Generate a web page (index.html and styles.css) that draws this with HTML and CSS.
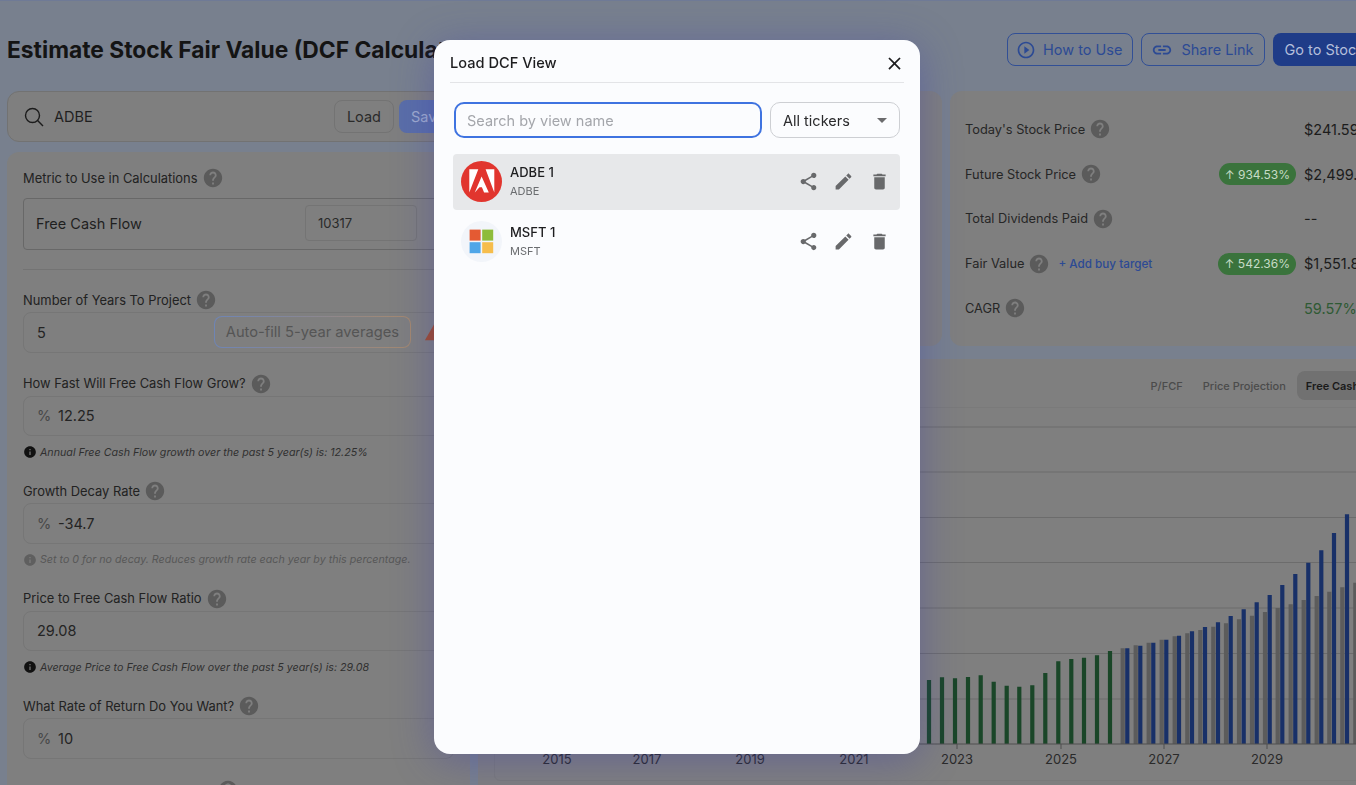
FILE: index.html
```html
<!DOCTYPE html>
<html lang="en">
<head>
	<meta charset="UTF-8">
	<title>Estimate Stock Fair Value (DCF Calculator)</title>
	<link rel="stylesheet" href="styles.css">
</head>
<body>
	<svg class="defs" width="0" height="0">
		<symbol id="i-help" viewBox="0 0 24 24"><path d="M12 2C6.48 2 2 6.48 2 12s4.48 10 10 10 10-4.48 10-10S17.52 2 12 2zm1 17h-2v-2h2v2zm2.07-7.75-.9.92C13.45 12.9 13 13.5 13 15h-2v-.5c0-1.1.45-2.1 1.17-2.83l1.24-1.26c.37-.36.59-.86.59-1.41 0-1.1-.9-2-2-2s-2 .9-2 2H8c0-2.21 1.79-4 4-4s4 1.79 4 4c0 .88-.36 1.68-.93 2.25z"/></symbol>
		<symbol id="i-info" viewBox="0 0 24 24"><path d="M12 2C6.48 2 2 6.48 2 12s4.48 10 10 10 10-4.48 10-10S17.52 2 12 2zm1 15h-2v-6h2v6zm0-8h-2V7h2v2z"/></symbol>
		<symbol id="i-share" viewBox="0 0 24 24"><path d="M18 16.08c-.76 0-1.44.3-1.96.77L8.91 12.7c.05-.23.09-.46.09-.7s-.04-.47-.09-.7l7.05-4.11c.54.5 1.25.81 2.04.81 1.66 0 3-1.34 3-3s-1.34-3-3-3-3 1.34-3 3c0 .24.04.47.09.7L8.04 9.81C7.5 9.31 6.79 9 6 9c-1.66 0-3 1.34-3 3s1.34 3 3 3c.79 0 1.5-.31 2.04-.81l7.12 4.16c-.05.21-.08.43-.08.65 0 1.61 1.31 2.92 2.92 2.92s2.92-1.31 2.92-2.92-1.31-2.92-2.92-2.92z"/></symbol>
		<symbol id="i-edit" viewBox="0 0 24 24"><path d="M3 17.25V21h3.75L17.81 9.94l-3.75-3.75L3 17.25zM20.71 7.04c.39-.39.39-1.02 0-1.41l-2.34-2.34c-.39-.39-1.02-.39-1.41 0l-1.83 1.83 3.75 3.75 1.83-1.83z"/></symbol>
		<symbol id="i-delete" viewBox="0 0 24 24"><path d="M6 19c0 1.1.9 2 2 2h8c1.1 0 2-.9 2-2V7H6v12zM19 4h-3.5l-1-1h-5l-1 1H5v2h14V4z"/></symbol>
	</svg>

	<div class="page">
		<div class="topbar">
			<h1>Estimate Stock Fair Value (DCF Calculator)</h1>
			<div class="top-btns">
				<a class="btn-line how">
					<svg viewBox="0 0 24 24" width="20" height="20"><path d="M10 16.5l6-4.5-6-4.5v9zM12 2C6.48 2 2 6.48 2 12s4.48 10 10 10 10-4.48 10-10S17.52 2 12 2zm0 18c-4.41 0-8-3.59-8-8s3.59-8 8-8 8 3.59 8 8-3.59 8-8 8z"/></svg>
					How to Use
				</a>
				<a class="btn-line">
					<svg viewBox="0 0 24 24" width="22" height="22"><path d="M3.9 12c0-1.71 1.39-3.1 3.1-3.1h4V7H7c-2.76 0-5 2.24-5 5s2.24 5 5 5h4v-1.9H7c-1.71 0-3.1-1.39-3.1-3.1zM8 13h8v-2H8v2zm9-6h-4v1.9h4c1.71 0 3.1 1.39 3.1 3.1s-1.39 3.1-3.1 3.1h-4V17h4c2.76 0 5-2.24 5-5s-2.24-5-5-5z"/></svg>
					Share Link
				</a>
				<a class="btn-fill">Go to Stock Analysis</a>
			</div>
		</div>

		<div class="main">
			<div class="left">
				<div class="search-card">
					<svg class="search-icon" viewBox="0 0 20 20" width="20" height="20"><circle cx="8.5" cy="8.5" r="7"/><path d="M13.6 13.6l5.4 5.4"/></svg>
					<span class="ticker">ADBE</span>
					<a class="btn-load">Load</a>
					<a class="btn-save">Save</a>
				</div>

				<div class="form-card">
					<div class="label first">Metric to Use in Calculations <svg class="help"><use href="#i-help"/></svg></div>
					<div class="metric">
						<span>Free Cash Flow</span>
						<div class="metric-input">10317</div>
					</div>
					<div class="divider"></div>

					<div class="group">
						<div class="label">Number of Years To Project <svg class="help"><use href="#i-help"/></svg></div>
						<div class="field">
							<span class="val">5</span>
							<a class="btn-auto">Auto-fill 5-year averages</a>
							<svg class="warn" viewBox="0 0 24 24" width="22" height="22"><path d="M1 21h22L12 2 1 21z"/></svg>
						</div>
					</div>

					<div class="group">
						<div class="label">How Fast Will Free Cash Flow Grow? <svg class="help"><use href="#i-help"/></svg></div>
						<div class="field"><span class="unit">%</span><span class="val">12.25</span></div>
						<div class="hint"><svg class="info"><use href="#i-info"/></svg>Annual Free Cash Flow growth over the past 5 year(s) is: 12.25%</div>
					</div>

					<div class="group">
						<div class="label">Growth Decay Rate <svg class="help"><use href="#i-help"/></svg></div>
						<div class="field"><span class="unit">%</span><span class="val">-34.7</span></div>
						<div class="hint faded"><svg class="info"><use href="#i-info"/></svg>Set to 0 for no decay. Reduces growth rate each year by this percentage.</div>
					</div>

					<div class="group">
						<div class="label">Price to Free Cash Flow Ratio <svg class="help"><use href="#i-help"/></svg></div>
						<div class="field"><span class="val">29.08</span></div>
						<div class="hint"><svg class="info"><use href="#i-info"/></svg>Average Price to Free Cash Flow over the past 5 year(s) is: 29.08</div>
					</div>

					<div class="group">
						<div class="label">What Rate of Return Do You Want? <svg class="help"><use href="#i-help"/></svg></div>
						<div class="field"><span class="unit">%</span><span class="val">10</span></div>
					</div>

					<!-- only the top of this icon shows at the bottom of the window -->
					<div class="label cut-off"><svg class="help"><use href="#i-help"/></svg></div>
				</div>
			</div>

			<div class="right">
				<div class="cards">
					<div class="card"></div>
					<div class="card results">
						<div class="row">
							<div class="row-label">Today's Stock Price <svg class="help"><use href="#i-help"/></svg></div>
							<div class="row-val">$241.59</div>
						</div>
						<div class="row">
							<div class="row-label">Future Stock Price <svg class="help"><use href="#i-help"/></svg></div>
							<span class="badge">↑ 934.53%</span>
							<div class="row-val">$2,499.10</div>
						</div>
						<div class="row">
							<div class="row-label">Total Dividends Paid <svg class="help"><use href="#i-help"/></svg></div>
							<div class="row-val">--</div>
						</div>
						<div class="row">
							<div class="row-label">Fair Value <svg class="help"><use href="#i-help"/></svg><a class="buy">+ Add buy target</a></div>
							<span class="badge">↑ 542.36%</span>
							<div class="row-val">$1,551.80</div>
						</div>
						<div class="row">
							<div class="row-label">CAGR <svg class="help"><use href="#i-help"/></svg></div>
							<div class="row-val green">59.57%</div>
						</div>
					</div>
				</div>

				<div class="chart-card">
					<div class="tabs">
						<span class="tab">P/FCF</span>
						<span class="tab">Price Projection</span>
						<span class="tab active">Free Cash Flow</span>
					</div>
					<div class="chart-box">
						<!-- viewBox uses page coordinates so the bars can be read straight off the picture -->
						<svg class="chart" viewBox="494 407 904 373" width="904" height="373">
							<path class="grid" d="M494 427H1398M494 472H1398M494 517.5H1398M494 562.5H1398M494 608H1398M494 653.5H1398M494 699H1398"/>
							<path class="bars gray" d="M1122.7 744V648.3M1135.7 744V645.3M1148.7 744V642.7M1161.7 744V639.7M1174.7 744V636.3M1187.3 744V633.3M1200.3 744V630M1213.3 744V626.7M1226 744V623.3M1239 744V619.3M1252 744V615.7M1265 744V612M1277.7 744V608M1290.7 744V604.3M1303.7 744V600M1316.7 744V596M1329.3 744V591.7M1342.3 744V587.3M1355.3 744V582.7"/>
							<path class="bars green" d="M929 744V680M942 744V677.3M955 744V678.3M968 744V677M980.7 744V675.3M993.7 744V681.7M1006.7 744V685.7M1019.3 744V686.7M1032.3 744V685.3M1045.3 744V673M1058.3 744V661.3M1071.3 744V659M1084 744V657.7M1097 744V655.3M1110 744V651"/>
							<path class="bars blue" d="M1127.3 744V648.3M1140.3 744V645.7M1153.3 744V642.7M1166.3 744V639.7M1179 744V635.7M1192 744V631.3M1205 744V627M1218 744V622.3M1230.7 744V616M1243.7 744V609.3M1256.7 744V602.3M1269.7 744V595M1282.3 744V585M1295.3 744V574M1308.3 744V562.7M1321.3 744V550.3M1334 744V533M1347 744V514.3"/>
							<path class="axis" d="M494 744H1398M557 744v5M647 744v5M750 744v5M854 744v5M957 744v5M1061 744v5M1164 744v5M1267 744v5"/>
							<g class="years">
								<text x="557" y="764">2015</text>
								<text x="647" y="764">2017</text>
								<text x="750" y="764">2019</text>
								<text x="854" y="764">2021</text>
								<text x="957" y="764">2023</text>
								<text x="1061" y="764">2025</text>
								<text x="1164" y="764">2027</text>
								<text x="1267" y="764">2029</text>
							</g>
						</svg>
					</div>
				</div>
			</div>
		</div>
	</div>

	<div class="modal">
		<div class="modal-head">
			<span>Load DCF View</span>
			<svg class="close" viewBox="0 0 24 24" width="21" height="21"><path d="M19 6.41 17.59 5 12 10.59 6.41 5 5 6.41 10.59 12 5 17.59 6.41 19 12 13.41 17.59 19 19 17.59 13.41 12z"/></svg>
		</div>
		<div class="filters">
			<input class="view-search" type="text" placeholder="Search by view name">
			<div class="view-select">All tickers<i class="caret"></i></div>
		</div>
		<div class="views">
			<div class="view selected">
				<svg class="logo" viewBox="0 0 41 41" width="41" height="41">
					<circle cx="20.5" cy="20.5" r="20.5" fill="#e1352e"/>
					<path fill="#fff" d="M8.3 8.3h9L8.3 31.5zM24.6 8.3h8.7v23.2zM20.6 15.5L27.8 31.5H23.1L20.9 26.2H18.5L13.8 31.5z"/>
				</svg>
				<div class="view-text">
					<div class="view-name">ADBE 1</div>
					<div class="view-ticker">ADBE</div>
				</div>
				<div class="view-actions">
					<svg><use href="#i-share"/></svg>
					<svg><use href="#i-edit"/></svg>
					<svg><use href="#i-delete"/></svg>
				</div>
			</div>
			<div class="view">
				<svg class="logo" viewBox="0 0 41 41" width="41" height="41">
					<circle cx="20.5" cy="20.5" r="20.5" fill="#f2f5fa"/>
					<rect x="8.6" y="8.6" width="11" height="11" fill="#e45a33"/>
					<rect x="21.2" y="8.6" width="11" height="11" fill="#8ebc3b"/>
					<rect x="8.6" y="21.2" width="11" height="11" fill="#4fa6e8"/>
					<rect x="21.2" y="21.2" width="11" height="11" fill="#f6bd4c"/>
				</svg>
				<div class="view-text">
					<div class="view-name">MSFT 1</div>
					<div class="view-ticker">MSFT</div>
				</div>
				<div class="view-actions">
					<svg><use href="#i-share"/></svg>
					<svg><use href="#i-edit"/></svg>
					<svg><use href="#i-delete"/></svg>
				</div>
			</div>
		</div>
	</div>
</body>
</html>
```
FILE: styles.css
```css
*{
	margin: 0;
	padding: 0;
	box-sizing: border-box;
}
body{
	height: 785px;
	overflow: hidden;
	background-color: #78808e;
	font-family: Inter, "Liberation Sans", sans-serif;
	color: #1f1f1f;
	border-top: 1px solid #6f7a96;
}
.defs{
	position: absolute;
}
.page{
	width: 1420px;
	padding-left: 7px;
}

/* top bar */
.topbar{
	display: flex;
	justify-content: space-between;
	align-items: center;
	height: 33px;
	margin-top: 32px;
}
.topbar h1{
	font-size: 22.8px;
	font-weight: 700;
	color: #141414;
	white-space: nowrap;
}
.top-btns{
	display: flex;
	gap: 8px;
	width: 413px;
	flex-shrink: 0;
}
.btn-line{
	display: flex;
	align-items: center;
	gap: 8px;
	height: 33px;
	padding: 0 11px 0 9px;
	border: 1px solid #314f96;
	border-radius: 8px;
	color: #2c4a94;
	font-size: 14.5px;
	white-space: nowrap;
}
.btn-line.how{
	gap: 7px;
	padding: 0 10px 0 8px;
}
.btn-line svg{
	fill: #2c4a94;
}
.btn-fill{
	display: flex;
	align-items: center;
	height: 33px;
	padding: 0 11px;
	border-radius: 8px;
	background-color: #1f3c88;
	color: #b4bfdb;
	font-size: 14.5px;
	white-space: nowrap;
}

.main{
	display: flex;
	gap: 8px;
	margin-top: 25px;
}
.left{
	width: 463px;
	flex-shrink: 0;
}
.right{
	width: 936px;
	flex-shrink: 0;
}

/* left column */
.search-card{
	display: flex;
	align-items: center;
	height: 51px;
	padding: 0 12.5px 0 16px;
	border: 1px solid #727272;
	border-radius: 12px;
	background-color: #7f7f7f;
}
.search-icon{
	fill: none;
	stroke: #1c1c1c;
	stroke-width: 1.4;
	margin-right: 10px;
}
.ticker{
	font-size: 14.5px;
	flex: 1;
}
.btn-load{
	display: flex;
	align-items: center;
	height: 33px;
	padding: 0 12px;
	margin-right: 5px;
	border: 1px solid #737373;
	border-radius: 8px;
	font-size: 14.5px;
	color: #2a2a2a;
}
.btn-save{
	display: flex;
	align-items: center;
	height: 33px;
	padding: 0 12px;
	border-radius: 8px;
	background-color: #5a6ea8;
	color: #a0acce;
	font-size: 14.5px;
}
.form-card{
	height: 700px;
	margin-top: 10px;
	padding: 16px;
	border-radius: 12px;
	background-color: #7f7f7f;
}
.label{
	display: flex;
	align-items: center;
	gap: 4px;
	height: 20px;
	font-size: 12.9px;
	color: #222;
	white-space: nowrap;
}
.label.first{
	margin-bottom: 10px;
}
.label.cut-off{
	padding-left: 194px;
}
.help{
	width: 22px;
	height: 22px;
	fill: #5b5b5b;
	flex-shrink: 0;
}
.metric{
	display: flex;
	justify-content: space-between;
	align-items: center;
	height: 52px;
	padding: 0 36px 2px 12px;
	border: 1px solid #686868;
	border-radius: 4px;
	font-size: 14.5px;
}
.metric-input{
	display: flex;
	align-items: center;
	width: 112px;
	height: 36px;
	padding-left: 12px;
	border: 1px solid #747474;
	border-radius: 4px;
	font-size: 13px;
	color: #2a2a2a;
}
.divider{
	height: 1px;
	margin: 19px 0 20px;
	background-color: #737373;
}
.group{
	margin-bottom: 21px;
}
.field{
	display: flex;
	align-items: center;
	height: 40.5px;
	margin-top: 2px;
	padding: 0 13px;
	border: 1px solid #767676;
	border-radius: 8px;
	font-size: 14.5px;
}
.unit{
	width: 21px;
	color: #484848;
}
.val{
	color: #242424;
}
.btn-auto{
	display: flex;
	align-items: center;
	height: 32px;
	margin-left: auto;
	padding: 0 11px;
	border: 1px solid transparent;
	border-radius: 8px;
	background: linear-gradient(#7f7f7f, #7f7f7f) padding-box, linear-gradient(90deg, #6f85b5, #a5896f) border-box;
	color: #555;
	font-size: 14.7px;
	white-space: nowrap;
}
.warn{
	fill: #a34c2a;
	margin: 0 -6px 0 13px;
	flex-shrink: 0;
}
.hint{
	display: flex;
	align-items: center;
	height: 16px;
	margin-top: 8px;
	font-size: 10.7px;
	font-style: italic;
	color: #303030;
	white-space: nowrap;
}
.hint.faded{
	color: #575757;
}
.info{
	width: 14px;
	height: 14px;
	margin-right: 3px;
	fill: #111;
}
.faded .info{
	fill: #5f5f5f;
}

/* right area */
.cards{
	display: flex;
	gap: 8px;
}
.card{
	width: 464px;
	height: 255px;
	border-radius: 12px;
	background-color: #7f7f7f;
}
.results{
	padding: 16px 15px 0;
}
.row{
	display: flex;
	align-items: center;
	height: 44.75px;
}
.row-label{
	display: flex;
	align-items: center;
	gap: 4px;
	flex: 1;
	font-size: 12.8px;
	color: #262626;
}
.row-val{
	width: 95px;
	font-size: 14.5px;
	white-space: nowrap;
	color: #1c1c1c;
}
.row-val.green{
	color: #2f5a34;
}
.badge{
	display: flex;
	align-items: center;
	height: 22px;
	margin-right: 8px;
	padding: 0 6px;
	border-radius: 11px;
	background-color: #3a733c;
	color: #c6dcc6;
	font-size: 12px;
	white-space: nowrap;
}
.buy{
	margin-left: 4px;
	font-size: 11.7px;
	font-weight: 500;
	color: #2c4a94;
}
.chart-card{
	height: 430px;
	margin-top: 13px;
	padding: 12px 16px 0;
	border-radius: 12px 12px 0 0;
	background-color: #7f7f7f;
}
.tabs{
	display: flex;
	justify-content: flex-end;
	gap: 2px;
	height: 29px;
	padding-right: 2px;
	margin-bottom: 7px;
}
.tab{
	display: flex;
	align-items: center;
	padding: 0 9px;
	border-radius: 8px;
	font-size: 11px;
	font-weight: 500;
	color: #4b4b4b;
	white-space: nowrap;
}
.tab.active{
	background-color: #717171;
	color: #1a1a1a;
	font-weight: 600;
}
.chart-box{
	height: 374px;
	border: 1px solid #7a7a7a;
	border-radius: 6px;
}
.chart{
	display: block;
	margin: -1px;
}
.grid{
	stroke: #6c6c6c;
	stroke-width: 1;
	fill: none;
}
.bars{
	fill: none;
	stroke-width: 4.2;
}
.bars.gray{
	stroke: #5c5c5c;
}
.bars.green{
	stroke: #1a4628;
}
.bars.blue{
	stroke: #183068;
}
.axis{
	stroke: #505050;
	fill: none;
}
.years text{
	font-size: 13px;
	fill: #2a2a2a;
	text-anchor: middle;
}

/* load view modal */
.modal{
	position: fixed;
	left: 434px;
	top: 40px;
	width: 486px;
	height: 714px;
	padding: 0 16px;
	border-radius: 16px;
	background-color: #fbfcfe;
	box-shadow: 0 6px 40px rgba(60, 60, 170, .4);
}
.modal-head{
	display: flex;
	justify-content: space-between;
	align-items: center;
	height: 43px;
	padding-top: 4px;
	border-bottom: 1px solid #e3e4e7;
	font-size: 14.6px;
	font-weight: 500;
	color: #1d1d1f;
}
.close{
	fill: #1d1d1f;
	margin-right: -1px;
}
.filters{
	display: flex;
	gap: 8px;
	margin-top: 19px;
	padding: 0 4px;
}
.view-search{
	width: 308px;
	height: 36px;
	padding: 0 11px;
	border: 2px solid #3f73e0;
	border-radius: 10px;
	outline: none;
	background-color: #fbfcfe;
	font-family: inherit;
	font-size: 14.5px;
}
.view-search::placeholder{
	color: #a4a6ab;
}
.view-select{
	display: flex;
	align-items: center;
	justify-content: space-between;
	width: 130px;
	height: 36px;
	padding: 0 12px;
	border: 1.5px solid #cdcfd3;
	border-radius: 10px;
	font-size: 14.5px;
	color: #2a2a2c;
}
.caret{
	width: 0;
	height: 0;
	border-left: 5px solid transparent;
	border-right: 5px solid transparent;
	border-top: 5px solid #6b6b6d;
}
.views{
	display: flex;
	flex-direction: column;
	gap: 3.5px;
	margin: 16px 4px 0 3px;
}
.view{
	display: flex;
	align-items: center;
	height: 56px;
	padding: 0 0 1px 8px;
	border-radius: 4px;
}
.view.selected{
	background-color: #e7e8ea;
}
.logo{
	flex-shrink: 0;
}
.view-text{
	flex: 1;
	margin: -1px 0 0 8px;
}
.view-name{
	font-size: 13px;
	font-weight: 500;
	color: #1d1d1f;
	line-height: 18px;
}
.view-ticker{
	margin-top: 2px;
	font-size: 11px;
	color: #6b6d70;
	line-height: 16px;
}
.view-actions{
	display: flex;
	gap: 14.5px;
	padding-right: 10.5px;
}
.view-actions svg{
	width: 21px;
	height: 21px;
	fill: #68696b;
}
```
